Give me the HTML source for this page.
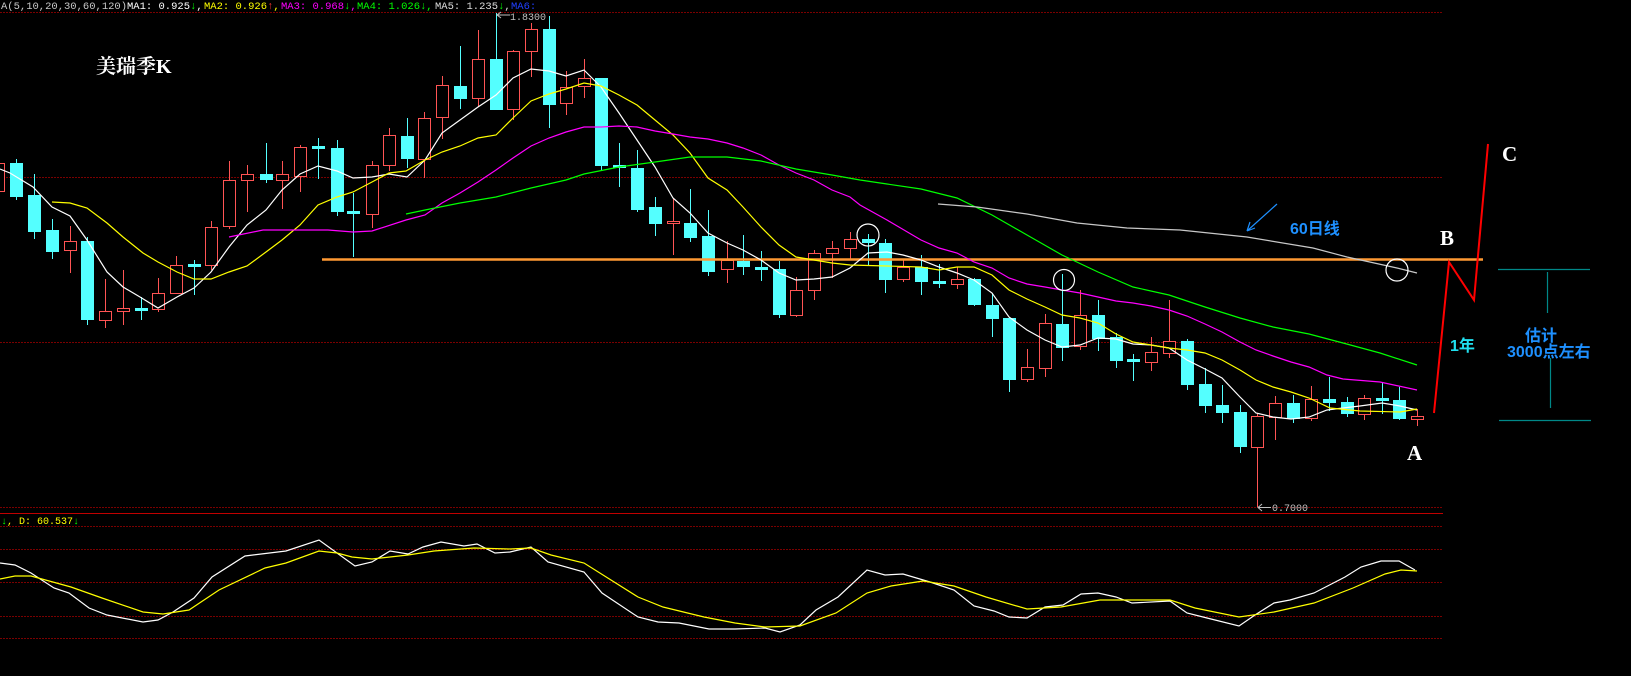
<!DOCTYPE html>
<html><head><meta charset="utf-8"><style>
html,body{margin:0;padding:0;background:#000;width:1631px;height:676px;overflow:hidden}
svg{display:block}
.m{font-family:"Liberation Mono",monospace;font-size:10px}
.h{font-family:"Liberation Mono",monospace;font-size:10.5px}
</style></head><body>
<svg width="1631" height="676" viewBox="0 0 1631 676" xmlns="http://www.w3.org/2000/svg">
<rect width="1631" height="676" fill="#000"/>
<g stroke="#7a0000" stroke-width="1" stroke-dasharray="2,1">
<line x1="0" y1="12.5" x2="1443" y2="12.5"/>
<line x1="0" y1="177.5" x2="1443" y2="177.5"/>
<line x1="0" y1="342.5" x2="1443" y2="342.5"/>
<line x1="0" y1="507.5" x2="1443" y2="507.5"/>
<line x1="0" y1="526.5" x2="1443" y2="526.5"/>
<line x1="0" y1="549.5" x2="1443" y2="549.5"/>
<line x1="0" y1="582.5" x2="1443" y2="582.5"/>
<line x1="0" y1="616.5" x2="1443" y2="616.5"/>
<line x1="0" y1="638.5" x2="1443" y2="638.5"/>
</g>
<line x1="0" y1="513.5" x2="1443" y2="513.5" stroke="#c00000" stroke-width="1"/>

<text class="h" y="9" fill="#c8c8c8"><tspan x="1">A(5,10,20,30,60,120)</tspan><tspan x="127" fill="#fff">MA1: 0.925</tspan><tspan fill="#0f0">↓</tspan><tspan fill="#fff">,</tspan><tspan x="204" fill="#ff0">MA2: 0.926</tspan><tspan fill="#f33">↑</tspan><tspan fill="#ff0">,</tspan><tspan x="281" fill="#f0f">MA3: 0.968</tspan><tspan fill="#0f0">↓</tspan><tspan fill="#f0f">,</tspan><tspan x="357" fill="#0f0">MA4: 1.026↓,</tspan><tspan x="435" fill="#ddd">MA5: 1.235</tspan><tspan fill="#0f0">↓</tspan><tspan fill="#ddd">,</tspan><tspan x="511" fill="#2040ff">MA6:</tspan></text>
<text class="m" y="524"><tspan x="1" fill="#0f0">↓</tspan><tspan fill="#ff0">, D: 60.537</tspan><tspan fill="#0f0">↓</tspan></text>

<text x="96" y="73" fill="#fff" font-family="'Liberation Serif','Noto Serif CJK SC',serif" font-weight="bold" font-size="20">美瑞季K</text>

<path stroke="#ff5454" stroke-width="1" fill="none" d="M-1.5 160V195M70.5 226V273M105.5 279V328M123.5 270V325M158.5 278V312M176.5 256V294M211.5 221V270M229.5 161V229M247.5 165V212M282.5 161V209M300.5 145V192M372.5 161V228M389.5 128V171M424.5 112V178M442.5 76V139M478.5 30V107M513.5 50V120M531.5 23V77M566.5 71V115M584.5 59V98M673.5 198V255M727.5 241V283M796.5 277V317M814.5 250V300M832.5 241V278M850.5 232V260M903.5 260V282M957.5 267V289M1027.5 349V382M1045.5 314V377M1080.5 290V350M1151.5 337V371M1169.5 300V358M1257.5 413V507M1275.5 396V440M1311.5 386V421M1364.5 395V420M1417.5 409V426"/>
<path stroke="#54ffff" stroke-width="1" fill="none" d="M16.5 159V200M34.5 174V239M52.5 219V259M87.5 237V325M141.5 297V320M194.5 260V295M266.5 143V183M318.5 138V179M337.5 140V216M353.5 193V257M407.5 118V168M460.5 46V109M496.5 13V110M549.5 16V128M601.5 78V170M619.5 143V187M637.5 150V212M655.5 197V236M690.5 189V242M708.5 210V276M743.5 235V275M761.5 251V281M779.5 261V318M868.5 234V265M885.5 239V293M921.5 255V295M939.5 264V288M974.5 278V306M992.5 293V337M1009.5 317V392M1062.5 274V361M1098.5 300V351M1116.5 333V368M1133.5 354V381M1187.5 339V390M1205.5 368V413M1222.5 385V423M1240.5 405V453M1293.5 395V423M1329.5 377V411M1347.5 397V417M1382.5 383V414M1399.5 387V420"/>
<g fill="#000" stroke="#ff5454" stroke-width="1">
<rect x="-7.5" y="163.5" width="12" height="28"/>
<rect x="64.5" y="241.5" width="12" height="9"/>
<rect x="99.5" y="311.5" width="12" height="9"/>
<rect x="117.5" y="308.5" width="12" height="3"/>
<rect x="152.5" y="293.5" width="12" height="16"/>
<rect x="170.5" y="265.5" width="12" height="28"/>
<rect x="205.5" y="227.5" width="12" height="38"/>
<rect x="223.5" y="180.5" width="12" height="46"/>
<rect x="241.5" y="174.5" width="12" height="6"/>
<rect x="276.5" y="174.5" width="12" height="6"/>
<rect x="294.5" y="147.5" width="12" height="29"/>
<rect x="366.5" y="165.5" width="12" height="49"/>
<rect x="383.5" y="135.5" width="12" height="30"/>
<rect x="418.5" y="118.5" width="12" height="41"/>
<rect x="436.5" y="85.5" width="12" height="32"/>
<rect x="472.5" y="59.5" width="12" height="39"/>
<rect x="507.5" y="51.5" width="12" height="58"/>
<rect x="525.5" y="29.5" width="12" height="22"/>
<rect x="560.5" y="87.5" width="12" height="16"/>
<rect x="578.5" y="78.5" width="12" height="8"/>
<rect x="667.5" y="221.5" width="12" height="2"/>
<rect x="721.5" y="260.5" width="12" height="9"/>
<rect x="790.5" y="290.5" width="12" height="25"/>
<rect x="808.5" y="253.5" width="12" height="37"/>
<rect x="826.5" y="248.5" width="12" height="5"/>
<rect x="844.5" y="239.5" width="12" height="9"/>
<rect x="897.5" y="267.5" width="12" height="12"/>
<rect x="951.5" y="279.5" width="12" height="5"/>
<rect x="1021.5" y="367.5" width="12" height="12"/>
<rect x="1039.5" y="323.5" width="12" height="45"/>
<rect x="1074.5" y="315.5" width="12" height="31"/>
<rect x="1145.5" y="352.5" width="12" height="10"/>
<rect x="1163.5" y="341.5" width="12" height="12"/>
<rect x="1251.5" y="416.5" width="12" height="31"/>
<rect x="1269.5" y="403.5" width="12" height="14"/>
<rect x="1305.5" y="399.5" width="12" height="19"/>
<rect x="1358.5" y="398.5" width="12" height="16"/>
<rect x="1411.5" y="416.5" width="12" height="3"/>
</g>
<g fill="#54ffff">
<rect x="10" y="163" width="13" height="34"/>
<rect x="28" y="195" width="13" height="37"/>
<rect x="46" y="230" width="13" height="22"/>
<rect x="81" y="241" width="13" height="79"/>
<rect x="135" y="308" width="13" height="3"/>
<rect x="188" y="264" width="13" height="3"/>
<rect x="260" y="174" width="13" height="6"/>
<rect x="312" y="146" width="13" height="3"/>
<rect x="331" y="148" width="13" height="64"/>
<rect x="347" y="211" width="13" height="3"/>
<rect x="401" y="136" width="13" height="23"/>
<rect x="454" y="86" width="13" height="13"/>
<rect x="490" y="59" width="13" height="51"/>
<rect x="543" y="29" width="13" height="76"/>
<rect x="595" y="78" width="13" height="88"/>
<rect x="613" y="165" width="13" height="3"/>
<rect x="631" y="168" width="13" height="42"/>
<rect x="649" y="207" width="13" height="17"/>
<rect x="684" y="223" width="13" height="15"/>
<rect x="702" y="236" width="13" height="36"/>
<rect x="737" y="261" width="13" height="6"/>
<rect x="755" y="267" width="13" height="3"/>
<rect x="773" y="269" width="13" height="46"/>
<rect x="862" y="239" width="13" height="4"/>
<rect x="879" y="243" width="13" height="37"/>
<rect x="915" y="267" width="13" height="15"/>
<rect x="933" y="281" width="13" height="3"/>
<rect x="968" y="279" width="13" height="26"/>
<rect x="986" y="305" width="13" height="14"/>
<rect x="1003" y="318" width="13" height="62"/>
<rect x="1056" y="324" width="13" height="24"/>
<rect x="1092" y="315" width="13" height="24"/>
<rect x="1110" y="337" width="13" height="24"/>
<rect x="1127" y="359" width="13" height="3"/>
<rect x="1181" y="341" width="13" height="44"/>
<rect x="1199" y="384" width="13" height="22"/>
<rect x="1216" y="405" width="13" height="8"/>
<rect x="1234" y="412" width="13" height="35"/>
<rect x="1287" y="403" width="13" height="16"/>
<rect x="1323" y="399" width="13" height="4"/>
<rect x="1341" y="402" width="13" height="12"/>
<rect x="1376" y="398" width="13" height="3"/>
<rect x="1393" y="400" width="13" height="19"/>
</g>

<line x1="322" y1="259.5" x2="1483" y2="259.5" stroke="#ff9933" stroke-width="2.5"/>

<g fill="none" stroke-width="1.2">
<polyline stroke="#fff" points="0,169 10,173 33,187 52,207 70,216 87,240 107,272 123,287 140,297 158,308 177,297 194,288 211,272 229,247 247,225 266,210 282,190 300,174 318,166 337,171 353,178 372,177 389,174 407,177 425,160 442,133 460,120 478,107 496,95 513,78 531,69 549,71 566,76 584,70 601,87 619,113 637,140 655,167 673,198 690,213 708,233 727,243 743,250 761,260 779,273 796,280 814,279 832,277 850,268 868,253 887,252 903,255 921,260 939,267 957,273 974,280 992,293 1009,317 1027,330 1045,340 1062,347 1080,345 1098,338 1116,339 1133,344 1151,345 1169,348 1187,360 1205,369 1222,378 1240,397 1256,413 1273,417 1291,419 1309,417 1327,410 1343,408 1360,406 1382,403 1400,406 1417,410"/>
<polyline stroke="#ffff00" points="52,202 70,203 87,208 107,223 123,237 143,253 158,262 177,272 194,279 211,279 229,272 247,266 266,252 282,240 300,225 318,205 337,197 353,192 372,182 389,173 406,171 425,160 442,152 460,146 478,138 496,135 513,118 531,101 549,94 566,89 584,83 601,86 619,95 637,105 655,120 673,135 690,153 708,178 727,190 743,207 761,227 779,245 796,257 814,260 832,263 850,265 887,266 921,267 939,270 957,267 974,267 992,275 1009,290 1027,299 1045,307 1062,315 1080,318 1098,323 1116,334 1133,342 1151,345 1169,348 1187,350 1205,353 1222,360 1240,370 1256,380 1273,387 1291,392 1309,398 1330,408 1360,411 1400,412 1417,409"/>
<polyline stroke="#ff00ff" points="229,237 263,230 328,230 353,232 372,231 406,220 425,215 442,203 460,193 478,182 496,170 513,158 531,146 549,138 566,132 584,127 601,127 619,126 637,127 655,131 673,134 690,137 708,139 727,143 743,148 761,155 779,165 796,173 814,180 832,190 850,197 860,205 887,220 921,240 939,248 957,253 974,262 992,268 1009,278 1027,284 1045,287 1062,290 1080,293 1098,297 1116,301 1133,303 1151,306 1169,310 1187,316 1205,324 1222,332 1240,342 1256,350 1273,356 1291,362 1309,367 1327,375 1343,379 1380,382 1417,390"/>
<polyline stroke="#00ff00" points="406,214 425,210 460,203 496,197 531,188 566,180 584,174 619,167 655,162 690,157 727,157 761,161 796,169 832,175 860,180 887,184 921,189 957,198 992,215 1027,235 1062,255 1098,272 1133,287 1169,295 1205,307 1240,318 1273,327 1309,334 1343,343 1380,353 1417,365"/>
<polyline stroke="#c8c8c8" points="938,204 977,207 1027,214 1077,223 1127,228 1180,230 1247,237 1313,248 1347,257 1397,268 1417,273"/>
</g>
<g fill="none" stroke="#fff" stroke-width="1.2">
<circle cx="868" cy="235" r="11"/>
<circle cx="1064" cy="280" r="10.5"/>
<circle cx="1397" cy="270" r="11"/>
</g>

<g stroke="#c0c0c0" fill="none" stroke-width="1"><path d="M497 15H510M501 12L497 15L501 18"/><path d="M1258 507.5H1271M1262 504L1258 507.5L1262 511"/></g>
<text class="m" x="510" y="20" fill="#c0c0c0">1.8300</text>
<text class="m" x="1272" y="511" fill="#c0c0c0">0.7000</text>

<path d="M1277 204L1247 231M1247 231L1250 222M1247 231L1255 228" stroke="#1e90ff" stroke-width="1.2" fill="none"/>
<text x="1290" y="234" fill="#1e90ff" font-family="'Liberation Sans','Noto Sans CJK SC',sans-serif" font-weight="bold" font-size="16">60日线</text>
<polyline points="1434,413 1449,262 1474,300 1488,144" fill="none" stroke="#ff0000" stroke-width="2"/>
<g fill="#fff" font-family="'Liberation Serif',serif" font-weight="bold" font-size="21">
<text x="1440" y="245">B</text>
<text x="1502" y="161">C</text>
<text x="1407" y="460">A</text>
</g>
<text x="1450" y="351" fill="#20e0f0" font-family="'Liberation Sans','Noto Sans CJK SC',sans-serif" font-weight="bold" font-size="16">1年</text>
<g stroke="#008888" stroke-width="1.2">
<line x1="1498" y1="269.5" x2="1590" y2="269.5"/>
<line x1="1499" y1="420.5" x2="1591" y2="420.5"/>
<line x1="1547.5" y1="272" x2="1547.5" y2="313"/>
<line x1="1550.5" y1="358" x2="1550.5" y2="408"/>
</g>
<g fill="#1e90ff" font-family="'Liberation Sans','Noto Sans CJK SC',sans-serif" font-weight="bold" font-size="16">
<text x="1525" y="341">估计</text>
<text x="1507" y="357">3000点左右</text>
</g>

<g fill="none" stroke-width="1.2">
<polyline stroke="#fff" points="0,563 15,565 31,573 54,588 69,593 89,608 107,615 143,622 158,620 173,612 194,598 212,577 245,556 286,551 319,540 355,566 372,562 390,551 408,554 423,547 441,542 464,546 477,544 495,553 510,552 531,547 548,562 584,572 602,593 638,617 658,622 679,623 709,629 735,629 765,628 780,632 800,625 816,610 838,597 867,570 885,575 903,574 930,582 954,590 974,606 994,611 1009,617 1027,618 1045,607 1063,605 1081,594 1098,593 1116,597 1132,603 1170,601 1187,613 1207,618 1239,626 1255,615 1274,603 1290,600 1314,593 1345,577 1361,567 1381,561 1399,561 1415,570"/>
<polyline stroke="#ffff00" points="0,579 15,576 31,576 71,587 102,598 143,612 163,614 189,610 219,590 265,568 286,563 319,551 337,553 352,557 372,559 408,555 434,551 474,548 510,549 531,548 551,555 584,563 638,597 663,607 704,617 735,623 765,627 800,626 836,613 867,593 891,586 923,581 954,586 986,597 1027,609 1061,607 1100,600 1128,600 1170,600 1195,608 1239,617 1274,612 1314,603 1353,588 1385,574 1401,570 1417,571"/>
</g>
</svg>
</body></html>
